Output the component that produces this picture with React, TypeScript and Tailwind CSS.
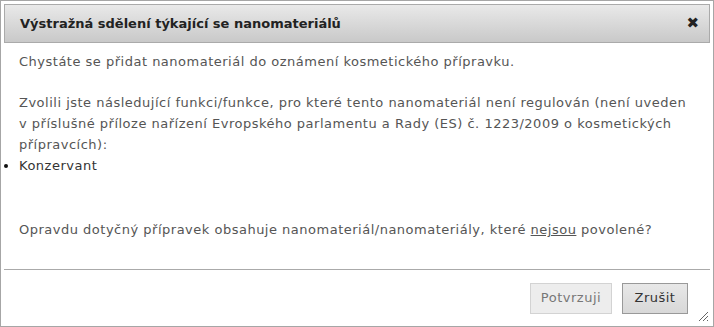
import React from 'react'

export default function App() {
  return (
    <div
      className="w-[714px] h-[327px] bg-white border border-[#a6a6a6] p-[3px] flex flex-col text-[13px] text-[#555]"
      style={{ fontFamily: '"DejaVu Sans", Verdana, sans-serif' }}
    >
      {/* titlebar */}
      <div className="h-[39px] shrink-0 flex items-center justify-between border border-[#aaa] bg-gradient-to-b from-[#e9e9e9] to-[#c9c9c9] pl-[15px] pr-[10px]">
        <span className="font-bold text-[13px] text-[#222]">Výstražná sdělení týkající se nanomateriálů</span>
        <span className="text-[#222] text-[15px] font-bold leading-none">✖</span>
      </div>

      {/* content */}
      <div className="flex-1 px-[15px] pt-[8px] leading-[21px] tracking-[0.5px]">
        <p>Chystáte se přidat nanomateriál do oznámení kosmetického přípravku.</p>
        <p className="mt-[20px]">
          Zvolili jste následující funkci/funkce, pro které tento nanomateriál není regulován (není uveden v příslušné
          příloze nařízení Evropského parlamentu a Rady (ES) č. 1223/2009 o kosmetických přípravcích):
        </p>
        <ul className="list-disc pl-0">
          <li className="list-outside text-[#333] marker:text-[#111]">Konzervant</li>
        </ul>
        <p className="mt-[43px]">
          Opravdu dotyčný přípravek obsahuje nanomateriál/nanomateriály, které <span className="underline">nejsou</span>{' '}
          povolené?
        </p>
      </div>

      {/* buttons */}
      <div className="relative h-[54px] shrink-0 border-t border-[#aaa] flex items-center justify-end gap-[10px] pr-[22px] pt-[3px] tracking-[0.5px]">
        <button className="w-[82px] h-[31px] border border-[#d3d3d3] bg-[#ededed] text-[#777] text-[13px] font-normal">
          Potvrzuji
        </button>
        <button className="w-[66px] h-[31px] border border-[#999] bg-gradient-to-b from-[#e8e8e8] to-[#d8d8d8] text-[#333] text-[13px] font-normal">
          Zrušit
        </button>
        <svg className="absolute right-[1px] bottom-[1px]" width="12" height="12" viewBox="0 0 12 12">
          <path d="M11 2 L2 11 M11 6 L6 11 M11 10 L10 11" stroke="#666" strokeWidth="1" fill="none" />
        </svg>
      </div>
    </div>
  )
}
